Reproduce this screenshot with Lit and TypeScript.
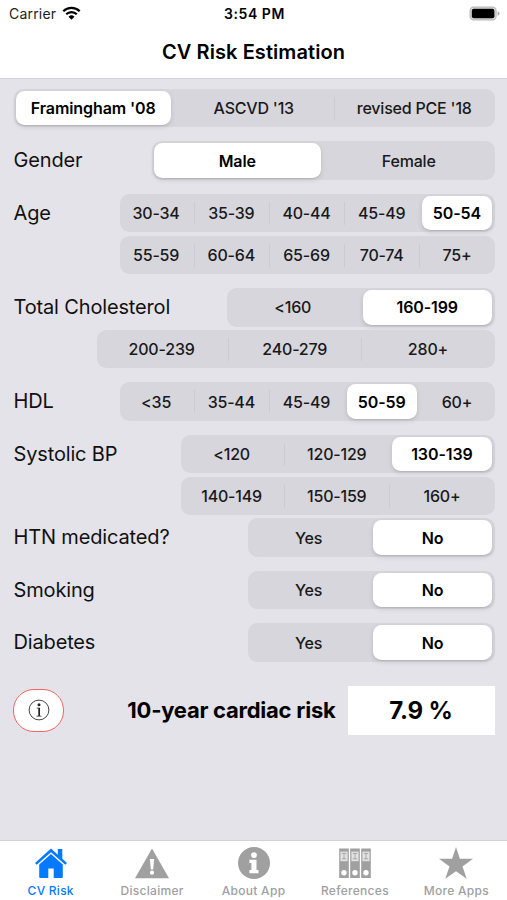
import { LitElement, html, css, svg, nothing } from "lit";
import { classMap } from "lit/directives/class-map.js";

type Bar = { items: string[]; selected?: number; size: string };
type Question = { label?: string; bars: Bar[]; tight?: boolean };

const questions: Question[] = [
  { bars: [{ items: ["Framingham '08", "ASCVD '13", "revised PCE '18"], selected: 0, size: "full" }] },
  { label: "Gender", bars: [{ items: ["Male", "Female"], selected: 0, size: "gender" }] },
  {
    label: "Age",
    bars: [
      { items: ["30-34", "35-39", "40-44", "45-49", "50-54"], selected: 4, size: "five" },
      { items: ["55-59", "60-64", "65-69", "70-74", "75+"], size: "five" },
    ],
  },
  {
    label: "Total Cholesterol",
    bars: [
      { items: ["<160", "160-199"], selected: 1, size: "two" },
      { items: ["200-239", "240-279", "280+"], size: "wide" },
    ],
  },
  { label: "HDL", bars: [{ items: ["<35", "35-44", "45-49", "50-59", "60+"], selected: 3, size: "five" }] },
  {
    label: "Systolic BP",
    bars: [
      { items: ["<120", "120-129", "130-139"], selected: 2, size: "three" },
      { items: ["140-149", "150-159", "160+"], size: "three" },
    ],
  },
  { label: "HTN medicated?", tight: true, bars: [{ items: ["Yes", "No"], selected: 1, size: "yesno" }] },
  { label: "Smoking", bars: [{ items: ["Yes", "No"], selected: 1, size: "yesno" }] },
  { label: "Diabetes", bars: [{ items: ["Yes", "No"], selected: 1, size: "yesno" }] },
];

const binder = (x: number) => svg`
  <rect x=${x} y="1.5" width="9.6" height="29.5" fill="currentColor"/>
  <rect x=${x + 1.2} y="4.6" width="7.2" height="9.6" fill="#e2e2e2"/>
  <path d="M${x + 2.6} 6.4h4.4M${x + 4.8} 6.4v5.4M${x + 2.6} 11.8h4.4" stroke="#a8a8a8" stroke-width="1"/>
  <circle cx=${x + 4.8} cy="25.7" r="2.7" fill="#fff"/>`;

const icons = {
  house: svg`<path fill="currentColor" d="M17 1.6 1 15.9l1.7 1.9L17 5.2l14.3 12.6 1.7-1.9-4.7-4.2V1.9h-4.5v5.8z"/>
    <path fill="currentColor" d="M17 7 5.2 17.4V30q0 1 1 1h8.1v-9.5h5.4V31h8.1q1 0 1-1V17.4z"/>`,
  warning: svg`<path fill="currentColor" d="M17 1.5 34 31.2H0z"/>
    <path fill="#fff" d="M14.9 12h4.200l-.9 10.400h-2.400z"/><circle cx="17" cy="25.700" r="2.100" fill="#fff"/>`,
  info: svg`<circle cx="17" cy="16" r="16" fill="currentColor"/>
    <circle cx="17" cy="8.100" r="2.900" fill="#fff"/>
    <path fill="#fff" d="M12.400 12.800h7.100v10.200h2v3.300h-9.100v-3.300h2v-6.900h-2z"/>`,
  binders: svg`${binder(1.2)}${binder(12.2)}${binder(23.2)}`,
  star: svg`<path fill="currentColor" d="M17 0 20.900 11.800H34l-10.500 7.600 4.200 12.300L17 24.200 6.300 31.700l4.200-12.300L0 11.800h13.100z"/>`,
};

const tabs = [
  { label: "CV Risk", icon: icons.house, active: true },
  { label: "Disclaimer", icon: icons.warning },
  { label: "About App", icon: icons.info },
  { label: "References", icon: icons.binders },
  { label: "More Apps", icon: icons.star },
];

class SegmentBar extends LitElement {
  static properties = { items: { attribute: false }, selected: { type: Number } };
  declare items: string[];
  declare selected: number;

  static styles = css`
    :host { display: block; }
    .bar {
      display: flex; box-sizing: border-box; height: 38.5px;
      border-radius: 9.5px; background: #d7d6dc;
    }
    .cell { flex: 1 1 0; min-width: 0; display: flex; padding: 2px 2.5px; box-sizing: border-box; }
    .cell:first-child { margin-left: -1.5px; }
    .cell.on:first-child { padding-left: 3.5px; }
    .split { width: 1px; height: 23px; margin: 8px -1px 0 0; background: #cccbd1; flex: none; }
    .text {
      flex: 1; display: flex; align-items: center; justify-content: center;
      font: 500 16px Inter, sans-serif; letter-spacing: -0.2px; color: #19191b;
      white-space: nowrap; border-radius: 8.5px;
    }
    .on .text {
      background: #fff; color: #000; font-weight: 580; letter-spacing: -0.1px;
      box-shadow: 0 2px 5px rgba(0, 0, 0, 0.12), 0 1px 1px rgba(0, 0, 0, 0.07);
    }
  `;

  render() {
    return html`<div class="bar">
      ${this.items.map((item, i) => html`
        ${i > 0 && i !== this.selected && i - 1 !== this.selected ? html`<div class="split"></div>` : nothing}
        <div class=${classMap({ cell: true, on: i === this.selected })}><div class="text">${item}</div></div>`)}
    </div>`;
  }
}
customElements.define("segment-bar", SegmentBar);

class AppRoot extends LitElement {
  static styles = css`
    :host {
      display: flex; flex-direction: column; height: 900px; box-sizing: border-box;
      background: #e4e3e9; color: #000; font-family: Inter, sans-serif; overflow: hidden;
    }
    .head { height: 79px; box-sizing: border-box; background: #fff; border-bottom: 1px solid #d0d0d3; flex: none; }
    .status {
      display: grid; grid-template-columns: 1fr auto 1fr; align-items: center;
      height: 27px; padding: 0 7px 0 9px;
    }
    .carrier { display: flex; align-items: center; gap: 6px; font-size: 14px; letter-spacing: 0.2px; color: #222; }
    .wifi { width: 19px; height: 14px; margin-top: -2px; }
    .clock { font-size: 14px; font-weight: 560; letter-spacing: 0.55px; }
    .battery { justify-self: end; width: 31px; height: 15px; margin-top: -1px; }
    .title {
      height: 50px; display: flex; align-items: center; justify-content: center;
      font-size: 20px; font-weight: 580; letter-spacing: 0.08px;
    }
    .form { display: flex; flex-direction: column; padding: 9.8px 12.5px 0 13.5px; gap: 14.05px; flex: none; }
    .row { display: flex; justify-content: space-between; }
    .tight { margin-top: -10.9px; }
    .label {
      height: 38px; display: flex; align-items: center; font-size: 20px;
      letter-spacing: -0.15px; color: #111; white-space: nowrap;
    }
    .bars { display: flex; flex-direction: column; align-items: flex-end; gap: 3.2px; margin-left: auto; }
    .bars.over { margin-left: -200px; }
    .full { width: 481px; }
    .gender { width: 342.5px; }
    .five { width: 374.5px; }
    .two { width: 267.5px; }
    .wide { width: 398px; }
    .three { width: 314px; }
    .yesno { width: 246.5px; }
    .result { display: flex; align-items: center; height: 49px; margin-top: 24px; padding: 0 12.5px 0 13px; flex: none; }
    .info {
      width: 51px; height: 43px; box-sizing: border-box; border: 1.5px solid #f4655f; border-radius: 21px;
      background: #fff; display: flex; align-items: center; justify-content: center;
    }
    .info svg { width: 22px; height: 22px; }
    .risk { margin-left: auto; font-size: 22px; font-weight: 680; letter-spacing: -0.24px; }
    .value {
      width: 147px; height: 49px; margin-left: 12px; background: #fff; display: flex;
      align-items: center; justify-content: center; font-size: 24px; font-weight: 680; letter-spacing: -0.15px;
    }
    .tabs {
      margin-top: auto; height: 60px; box-sizing: border-box; border-top: 1px solid #d2d2d5;
      background: #fff; display: flex; flex: none;
    }
    .tab {
      flex: 1; display: flex; flex-direction: column; align-items: center; padding-top: 6px;
      color: #a0a0a0; font-size: 12px; font-weight: 500; letter-spacing: 0.3px; white-space: nowrap;
    }
    .tab svg { width: 34px; height: 32px; flex: none; }
    .name { line-height: 15px; margin-top: 4px; }
    .active { color: #057aff; letter-spacing: 0.25px; }
  `;

  render() {
    return html`
      <div class="head">
        <div class="status">
          <div class="carrier">Carrier
            <svg class="wifi" viewBox="0 0 19 14">
              <path d="M1.3 5.2a11.6 11.6 0 0 1 16.4 0M4.2 8.3a7.5 7.5 0 0 1 10.6 0" fill="none" stroke="#000" stroke-width="2.2"/>
              <path d="M9.5 13.7 6.5 10.7a4.3 4.3 0 0 1 6 0z"/>
            </svg>
          </div>
          <div class="clock">3:54 PM</div>
          <svg class="battery" viewBox="0 0 31 15">
            <rect x="1.1" y="1.1" width="26" height="12.8" rx="3.6" fill="#ddd" stroke="#b9b9b9" stroke-width="1.2"/>
            <rect x="2.8" y="2.8" width="22.6" height="9.4" rx="2" fill="#000"/>
            <path d="M28.600 5.200q2 .7 2 2.300t-2 2.300z" fill="#a9a9a9"/>
          </svg>
        </div>
        <div class="title">CV Risk Estimation</div>
      </div>
      <div class="form">
        ${questions.map((q) => html`
          <div class=${classMap({ row: true, tight: !!q.tight })}>
            ${q.label ? html`<div class="label">${q.label}</div>` : nothing}
            <div class=${classMap({ bars: true, over: q.bars.some((b) => b.size === "wide") })}>
              ${q.bars.map((b) => html`<segment-bar class=${b.size} .items=${b.items} .selected=${b.selected ?? -9}></segment-bar>`)}
            </div>
          </div>`)}
      </div>
      <div class="result">
        <div class="info">
          <svg viewBox="0 0 22 22">
            <circle cx="11" cy="11" r="9.900" fill="none" stroke="#444" stroke-width="1"/>
            <circle cx="11" cy="5.700" r="1.500" fill="#222"/>
            <path d="M8.700 8.800h3.300v8h1.500v.8H8.600v-.8h1.700V9.600H8.700z" fill="#222"/>
          </svg>
        </div>
        <div class="risk">10-year cardiac risk</div>
        <div class="value">7.9 %</div>
      </div>
      <div class="tabs">
        ${tabs.map((t) => html`
          <div class=${classMap({ tab: true, active: !!t.active })}>
            <svg viewBox="0 0 34 32">${t.icon}</svg>
            <div class="name">${t.label}</div>
          </div>`)}
      </div>`;
  }
}
customElements.define("app-root", AppRoot);
